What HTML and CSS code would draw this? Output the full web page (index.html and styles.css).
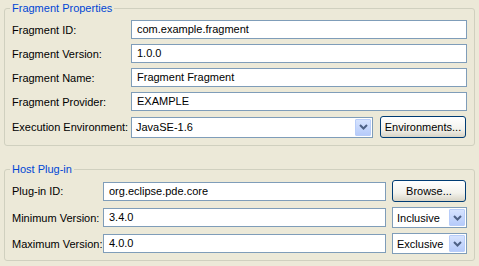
FILE: index.html
```html
<!DOCTYPE html>
<html lang="en">
<head>
  <meta charset="UTF-8">
  <title>Fragment Content</title>
  <link rel="stylesheet" href="styles.css">
</head>
<body>
  <fieldset class="group fragment-group">
    <legend>Fragment Properties</legend>

    <label>Fragment ID:</label>
    <div class="field wide">com.example.fragment</div>

    <label>Fragment Version:</label>
    <div class="field wide">1.0.0</div>

    <label>Fragment Name:</label>
    <div class="field wide">Fragment Fragment</div>

    <label>Fragment Provider:</label>
    <div class="field wide">EXAMPLE</div>

    <label>Execution Environment:</label>
    <div class="combo">
      <span class="combo-value">JavaSE-1.6</span>
      <span class="combo-arrow">
        <svg width="9" height="6" viewBox="0 0 9 6"><path d="M1 1 L4.5 4.5 L8 1" fill="none" stroke="#4d6185" stroke-width="2"/></svg>
      </span>
    </div>
    <button class="xp-button">Environments...</button>
  </fieldset>

  <fieldset class="group host-group">
    <legend>Host Plug-in</legend>

    <label>Plug-in ID:</label>
    <div class="field">org.eclipse.pde.core</div>
    <button class="xp-button">Browse...</button>

    <label>Minimum Version:</label>
    <div class="field">3.4.0</div>
    <div class="combo">
      <span class="combo-value">Inclusive</span>
      <span class="combo-arrow">
        <svg width="9" height="6" viewBox="0 0 9 6"><path d="M1 1 L4.5 4.5 L8 1" fill="none" stroke="#4d6185" stroke-width="2"/></svg>
      </span>
    </div>

    <label>Maximum Version:</label>
    <div class="field">4.0.0</div>
    <div class="combo">
      <span class="combo-value">Exclusive</span>
      <span class="combo-arrow">
        <svg width="9" height="6" viewBox="0 0 9 6"><path d="M1 1 L4.5 4.5 L8 1" fill="none" stroke="#4d6185" stroke-width="2"/></svg>
      </span>
    </div>
  </fieldset>
</body>
</html>
```

FILE: styles.css
```css
/* Windows XP style form */
body {
  margin: 0;
  padding-top: 2px;
  background-color: #ece9d8;
  font-family: "Liberation Sans", Arial, sans-serif;
  font-size: 11px;
  color: #000;
}

.group {
  margin: 0 4px;
  padding: 5px 7px 7px 7px;
  border: 1px solid #d0d0bf;
  border-radius: 3px;
  display: grid;
  align-items: center;
}

.group legend {
  margin-left: -2px;
  padding: 0 2px;
  line-height: 13px;
  color: #0046d5;
}

.group label {
  white-space: nowrap;
}

.fragment-group {
  grid-template-columns: 112px 1fr 87px;
  grid-template-rows: 19px 19px 19px 19px 22px;
  column-gap: 7px;
  row-gap: 5px;
}

.host-group {
  margin-top: 17px;
  padding-top: 4px;
  padding-bottom: 6px;
  grid-template-columns: 85px 1fr 75px;
  grid-template-rows: 22px 21px 21px;
  column-gap: 6px;
  row-gap: 5px;
}

.field {
  height: 19px;
  box-sizing: border-box;
  border: 1px solid #7f9db9;
  background-color: #fff;
  padding-left: 5px;
  line-height: 17px;
  white-space: nowrap;
}

.field.wide {
  grid-column: 2 / 4;
}

.combo {
  height: 21px;
  box-sizing: border-box;
  border: 1px solid #7f9db9;
  background-color: #fff;
  display: flex;
  align-items: center;
  justify-content: space-between;
  padding: 1px;
}

.combo-value {
  padding-left: 3px;
}

.combo-arrow {
  width: 16px;
  height: 17px;
  box-sizing: border-box;
  border: 1px solid #b8cdf9;
  border-radius: 1px;
  background: linear-gradient(#d6e3fe, #b6cbfa);
  display: flex;
  align-items: center;
  justify-content: center;
}

.xp-button {
  height: 22px;
  box-sizing: border-box;
  border: 1px solid #003c74;
  border-radius: 3px;
  background: linear-gradient(#ffffff, #f3f2ec 60%, #d8d4c6);
  font-family: inherit;
  font-size: 11px;
  color: #000;
  padding: 0;
  margin-right: 1px;
}
```
